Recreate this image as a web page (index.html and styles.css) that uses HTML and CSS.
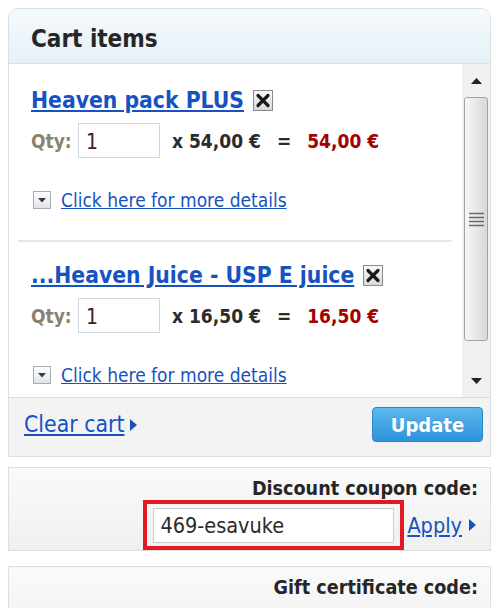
FILE: index.html
```html
<!DOCTYPE html>
<html lang="en">
<head>
<meta charset="UTF-8" />
<meta name="viewport" content="width=device-width, initial-scale=1" />
<title>Cart items</title>
<link rel="stylesheet" href="styles.css">
</head>
<body>
<div class="cart">
  <div class="cart-head"><h2>Cart items</h2></div>

  <div class="cart-body">
    <div class="items">
      <div class="item">
        <div class="item-title">
          <a href="#">Heaven pack PLUS</a>
          <svg class="del" width="20" height="21" viewBox="0 0 20 21">
            <defs><linearGradient id="dg" x1="0" y1="0" x2="0" y2="1"><stop offset="0" stop-color="#fbfbfb"/><stop offset="1" stop-color="#d8d8d8"/></linearGradient></defs>
            <rect x="0.5" y="0.5" width="19" height="20" fill="url(#dg)" stroke="#8a8a8a"/>
            <path d="M5 5.5 L15 15.5 M15 5.5 L5 15.5" stroke="#1a1a1a" stroke-width="3.2" stroke-linecap="round"/>
          </svg>
        </div>
        <div class="qty-row">
          <span class="qty-label">Qty:</span>
          <input class="qty" type="text" value="1">
          <span class="unit">x 54,00 €</span>
          <span class="eq">=</span>
          <span class="total">54,00 €</span>
        </div>
        <div class="details">
          <svg class="drop" width="18" height="18" viewBox="0 0 18 18">
            <defs><linearGradient id="pg" x1="0" y1="0" x2="0" y2="1"><stop offset="0" stop-color="#ffffff"/><stop offset="1" stop-color="#dfe4ea"/></linearGradient></defs>
            <rect x="0.5" y="0.5" width="17" height="17" fill="url(#pg)" stroke="#a3acb6"/>
            <path d="M5 7 L13 7 L9 11.5 Z" fill="#3a3a3a"/>
          </svg>
          <a href="#">Click here for more details</a>
        </div>
      </div>

      <div class="item">
        <div class="item-title">
          <a href="#">...Heaven Juice - USP E juice</a>
          <svg class="del" width="20" height="21" viewBox="0 0 20 21">
            <rect x="0.5" y="0.5" width="19" height="20" fill="url(#dg)" stroke="#8a8a8a"/>
            <path d="M5 5.5 L15 15.5 M15 5.5 L5 15.5" stroke="#1a1a1a" stroke-width="3.2" stroke-linecap="round"/>
          </svg>
        </div>
        <div class="qty-row">
          <span class="qty-label">Qty:</span>
          <input class="qty" type="text" value="1">
          <span class="unit">x 16,50 €</span>
          <span class="eq">=</span>
          <span class="total">16,50 €</span>
        </div>
        <div class="details">
          <svg class="drop" width="18" height="18" viewBox="0 0 18 18">
            <rect x="0.5" y="0.5" width="17" height="17" fill="url(#pg)" stroke="#a3acb6"/>
            <path d="M5 7 L13 7 L9 11.5 Z" fill="#3a3a3a"/>
          </svg>
          <a href="#">Click here for more details</a>
        </div>
      </div>
    </div>

    <div class="scrollbar">
      <div class="sb-btn">
        <svg width="11" height="6" viewBox="0 0 11 6"><path d="M0 6 L5.5 0 L11 6 Z" fill="#222"/></svg>
      </div>
      <div class="sb-thumb">
        <svg width="15" height="15" viewBox="0 0 15 15">
          <path d="M0 1.5 H15 M0 5.5 H15 M0 9.5 H15 M0 13.5 H15" stroke="#6a6a6a" stroke-width="1.4"/>
        </svg>
      </div>
      <div class="sb-track"></div>
      <div class="sb-btn">
        <svg width="11" height="6" viewBox="0 0 11 6"><path d="M0 0 L11 0 L5.5 6 Z" fill="#222"/></svg>
      </div>
    </div>
  </div>

  <div class="cart-foot">
    <div class="more-link">
      <a href="#">Clear cart</a>
      <svg class="tri" width="7" height="12" viewBox="0 0 7 12"><path d="M0 0 L7 6 L0 12 Z"/></svg>
    </div>
    <button class="update">Update</button>
  </div>
</div>

<div class="code-box">
  <div class="code-label">Discount coupon code:</div>
  <div class="code-row">
    <div class="highlight">
      <input class="code-input" type="text" value="469-esavuke">
    </div>
    <div class="more-link apply">
      <a href="#">Apply</a>
      <svg class="tri" width="7" height="12" viewBox="0 0 7 12"><path d="M0 0 L7 6 L0 12 Z"/></svg>
    </div>
  </div>
</div>

<div class="code-box gift">
  <div class="code-label">Gift certificate code:</div>
  <div class="code-row"></div>
</div>
</body>
</html>
```

FILE: styles.css
```css
html, body {
  height: 608px;
  overflow: hidden;
}
body {
  margin: 8px 9px 0 8px;
  font-family: "DejaVu Sans Condensed", "DejaVu Sans", sans-serif;
  font-stretch: condensed;
  color: #2b2b2b;
  background: #fff;
}
a {
  color: #1652c2;
  text-decoration: underline;
}
.cart {
  border: 1px solid #d6e0e7;
  border-radius: 10px 10px 0 0;
  overflow: hidden;
}
.cart-head {
  height: 55px;
  box-sizing: border-box;
  padding: 5px 0 0 22px;
  display: flex;
  align-items: center;
  background: linear-gradient(#f6fafc, #e5f1f7);
  border-bottom: 1px solid #d4e3eb;
}
.cart-head h2 {
  margin: 0;
  font-size: 24px;
  font-weight: bold;
  color: #262626;
}
.cart-body {
  display: flex;
  height: 333px;
  background: #fff;
}
.items {
  flex: 1;
  overflow: hidden;
  padding: 5px 0 0 9px;
}
.item {
  padding: 18px 0 29px 13px;
  margin-right: 10px;
  border-bottom: 2px solid #e6e6e6;
}
.item + .item {
  padding-top: 20px;
}
.item-title {
  display: flex;
  align-items: center;
  gap: 9px;
  font-size: 22.7px;
  font-weight: bold;
  line-height: 26px;
}
.qty-row {
  display: flex;
  align-items: center;
  margin-top: 10px;
  font-size: 19px;
  font-weight: bold;
}
.qty-label {
  color: #8b8170;
  width: 47px;
}
.qty {
  width: 82px;
  height: 35px;
  box-sizing: border-box;
  border: 1px solid #cfd8e0;
  padding: 2px 7px 0;
  font-family: inherit;
  font-stretch: condensed;
  font-size: 21px;
  color: #3a2222;
  outline: none;
}
.unit {
  margin-left: 12px;
}
.eq {
  margin-left: 16px;
}
.total {
  margin-left: 16px;
  color: #a30000;
}
.details {
  display: flex;
  align-items: center;
  margin-top: 31px;
  font-size: 19px;
  line-height: 22px;
}
.drop {
  margin: 0 10px 0 2px;
}
.scrollbar {
  width: 28px;
  display: flex;
  flex-direction: column;
  background: #f0f0f0;
}
.sb-btn {
  height: 33px;
  display: flex;
  align-items: center;
  justify-content: center;
}
.sb-thumb {
  height: 244px;
  margin: 0 2px;
  box-sizing: border-box;
  border: 1px solid #a2a2a2;
  border-radius: 3px;
  background: linear-gradient(to right, #f7f7f7, #d9d9d9);
  display: flex;
  align-items: center;
  justify-content: center;
}
.sb-track {
  flex: 1;
}
.cart-foot {
  height: 59px;
  box-sizing: border-box;
  padding: 9px 7px 0 15px;
  display: flex;
  justify-content: space-between;
  align-items: flex-start;
  background: #f3f3f3;
  border-top: 1px solid #dcdcdc;
}
.more-link {
  display: flex;
  align-items: center;
  font-size: 22.8px;
  line-height: 35px;
}
.tri {
  fill: #1652c2;
  margin-left: 6px;
}
.update {
  width: 111px;
  height: 35px;
  border: 1px solid #2a86cc;
  border-radius: 4px;
  background: linear-gradient(#5cb8ef, #2e93db);
  color: #fff;
  font-family: inherit;
  font-stretch: condensed;
  font-size: 20px;
  font-weight: bold;
  text-shadow: 0 -1px 0 rgba(0,0,0,0.15);
  cursor: pointer;
}
.code-box {
  margin-top: 10px;
  height: 84px;
  box-sizing: border-box;
  padding: 10px 12px 0 0;
  border: 1px solid #dedede;
  background: linear-gradient(#fafafa, #f0f0f0);
}
.gift {
  margin-top: 15px;
}
.code-label {
  text-align: right;
  font-size: 19.6px;
  font-weight: bold;
  line-height: 22px;
  color: #262626;
}
.code-row {
  display: flex;
  justify-content: flex-end;
  align-items: center;
}
.highlight {
  border: 4px solid #e01b23;
  padding: 4px 6px 3px;
}
.code-input {
  display: block;
  width: 241px;
  height: 35px;
  box-sizing: border-box;
  border: 1px solid #cccccc;
  padding: 0 6px;
  font-family: inherit;
  font-stretch: condensed;
  font-size: 21.5px;
  color: #2b2b2b;
  outline: none;
}
.apply {
  margin-left: 3px;
  margin-right: 2px;
  font-size: 21.5px;
}
.apply .tri {
  margin-left: 7px;
}
```
